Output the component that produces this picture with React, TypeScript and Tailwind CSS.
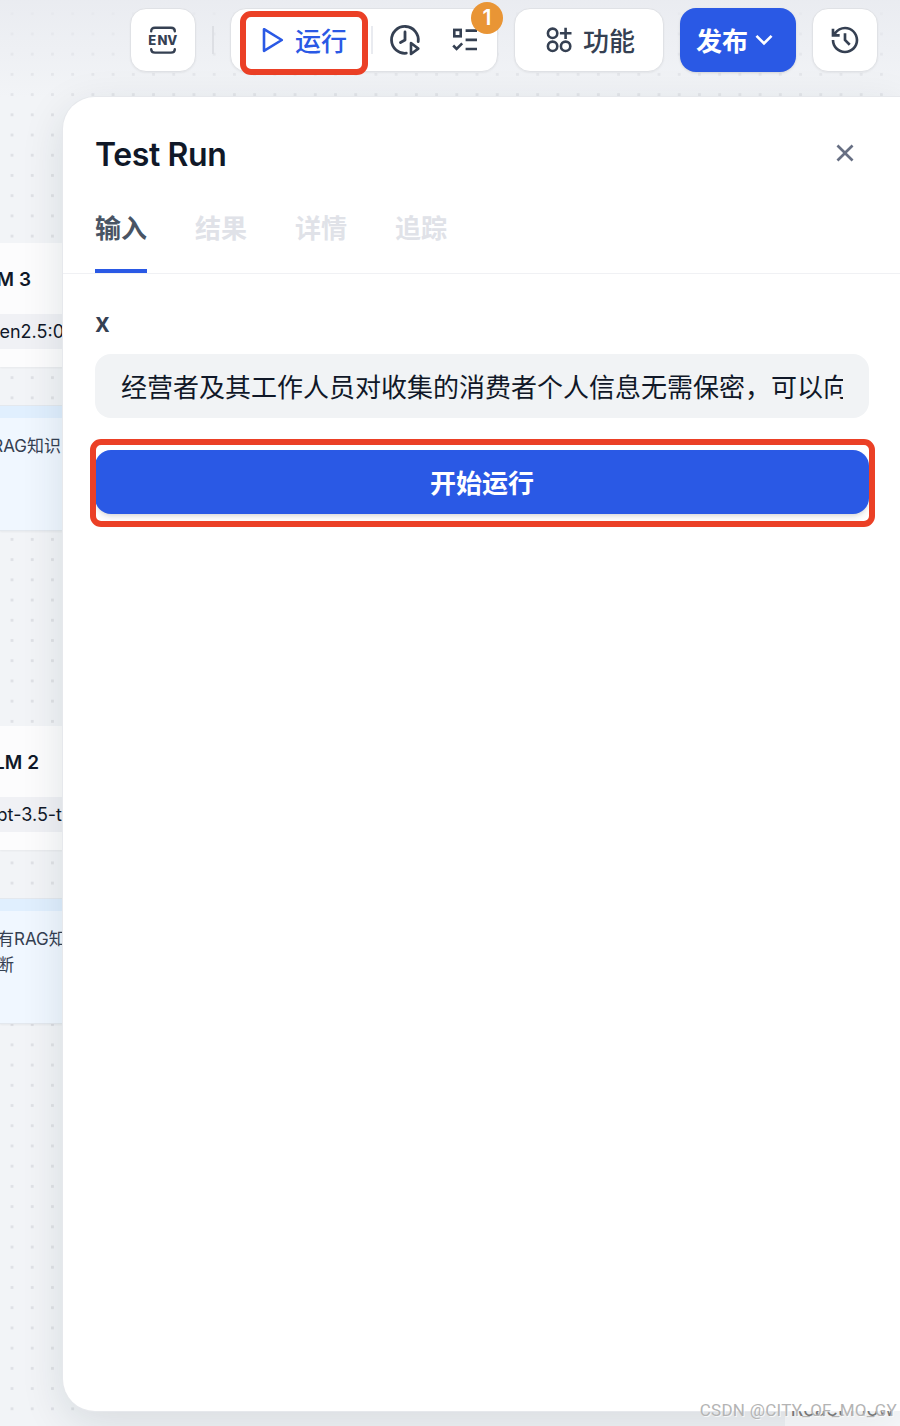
import React from 'react';
import { RiArrowDownSLine, RiCloseLine, RiHistoryLine } from 'react-icons/ri';

const tabs = ['输入', '结果', '详情', '追踪'];

const EnvIcon: React.FC = () => (
  <svg width="32" height="32" viewBox="0 0 32 32" fill="none" stroke="#354052" strokeWidth="2.4" strokeLinecap="round">
    <path d="M4.200 7.200C4.200 4.800 5.400 3.800 8 3.800H24C26.600 3.800 27.800 4.800 27.800 7.200" />
    <path d="M4.200 25.200C4.200 27.600 5.400 28.600 8 28.600H24C26.600 28.600 27.800 27.600 27.800 25.200" />
    <text x="1.2 10.4 20.2" y="20.900" fontSize="13" fontWeight="800" fontFamily="Inter, sans-serif" fill="#354052" stroke="none">ENV</text>
  </svg>
);

const PlayIcon: React.FC = () => (
  <svg width="24" height="28" viewBox="0 0 24 28" fill="none" stroke="#2a59e5" strokeWidth="2.6" strokeLinejoin="round">
    <path d="M3 3.200L20.800 14L3 24.800Z" />
  </svg>
);

const ClockPlayIcon: React.FC = () => (
  <svg width="32" height="32" viewBox="0 0 32 32" fill="none" stroke="#354052" strokeWidth="2.8" strokeLinecap="round" strokeLinejoin="round">
    <path d="M17.300 29.200A13.400 13.400 0 1 1 29.200 17.600" />
    <path d="M16 8V16L11.500 18.500" />
    <path d="M22 19L29.300 24.600L22 30Z" strokeWidth="2.600" />
  </svg>
);

const ChecklistIcon: React.FC = () => (
  <svg width="28" height="26" viewBox="0 0 28 26" fill="none" stroke="#354052" strokeWidth="2.600">
    <rect x="3.300" y="2.900" width="6.400" height="6.400" />
    <path d="M14.600 3.600H26M14.600 12.900H26M14.600 22H26" />
    <path d="M2.200 18.500L5.600 21.900L11.200 16.300" />
  </svg>
);

const AppsAddIcon: React.FC = () => (
  <svg width="28" height="28" viewBox="0 0 28 28" fill="none" stroke="#354052" strokeWidth="2.600">
    <circle cx="7.600" cy="7.300" r="4.700" />
    <circle cx="7.600" cy="20.300" r="4.700" />
    <circle cx="20.600" cy="20.300" r="4.700" />
    <path d="M20.600 1.800V13M14.900 7.300H26.500" />
  </svg>
);

interface LlmNodeProps {
  className: string;
  title: React.ReactNode;
  model: React.ReactNode;
}

const LlmNode: React.FC<LlmNodeProps> = ({ className, title, model }) => (
  <div className={`absolute left-0 w-24 h-[124px] bg-[#fcfcfd] shadow-xs text-[#101828] ${className}`}>
    <div className="h-[71px] pt-[3px] flex items-center text-[19px] font-semibold whitespace-nowrap">{title}</div>
    <div className="h-[35px] bg-[#f0f1f5] flex items-center text-[18px] whitespace-nowrap">{model}</div>
  </div>
);

const NoteNode: React.FC<{ className: string; children: React.ReactNode }> = ({ className, children }) => (
  <div className={`absolute left-0 w-24 h-[126px] bg-[#f0f7ff] border-y border-[#e3e8ee] shadow-xs text-[17px] leading-[26px] text-[#354052] ${className}`}>
    <div className="h-3 bg-[#e0effe]" />
    {children}
  </div>
);

export default function App() {
  return (
    <div className="relative w-[900px] h-[1426px] overflow-hidden bg-[#f2f4f7] font-['Inter','Noto_Sans_CJK_SC',sans-serif]">
      {/* Canvas */}
      <div className="absolute inset-0 bg-[radial-gradient(circle,#dfe1e6_1.300px,transparent_1.900px)] bg-[length:20.225px_20.225px] bg-[position:1.900px_3.600px]">
        <LlmNode
          className="top-[243px]"
          title={<div className="w-[31px] flex justify-end">LLM 3</div>}
          model={<div className="w-[64px] flex justify-end">qwen2.5:0</div>}
        />
        <NoteNode className="top-[405px]">
          <div className="w-[61px] mt-[15px] flex justify-end whitespace-nowrap">有RAG知识</div>
        </NoteNode>
        <LlmNode
          className="top-[726px]"
          title={<div className="w-[39px] flex justify-end">LLM 2</div>}
          model={<div className="w-[62px] flex justify-end">gpt-3.5-t</div>}
        />
        <NoteNode className="top-[898px]">
          <div className="w-24 mt-[15px] -ml-[3px] whitespace-nowrap">有RAG知识</div>
          <div className="-ml-[3px]">断</div>
        </NoteNode>
      </div>

      {/* Toolbar */}
      <header className="relative h-[97px] pt-2 pl-[130px] flex items-start bg-linear-to-b from-[#e9ebf0]/90 to-[#f2f4f7]/20 text-[26px] font-medium text-[#354052]">
        <button className="w-[66px] h-16 rounded-2xl bg-white border border-[#e0e2e6] shadow-xs flex items-center justify-center">
          <EnvIcon />
        </button>
        <div className="mt-[18px] ml-4 w-0.5 h-7 bg-[#dddfe4]" />
        <div className="relative ml-4 w-[268px] h-16 rounded-2xl bg-white border border-[#e0e2e6] shadow-xs flex items-center">
          <div className="ml-[30px] flex items-center gap-[10px] text-[#2a59e5]">
            <PlayIcon />
            <span className="pt-0.5">运行</span>
          </div>
          <div className="ml-[24px] w-0.5 h-7 bg-[#e9ebf0]" />
          <div className="ml-[16px]"><ClockPlayIcon /></div>
          <div className="ml-[30px]"><ChecklistIcon /></div>
          <div className="absolute left-[9px] top-[2px] w-[128px] h-[64px] rounded-[11px] border-[6px] border-[#eb4026]" />
          <div className="absolute -top-[7px] -right-[6px] w-8 h-8 rounded-full bg-[#e99535] flex items-center justify-center text-[21px] font-semibold text-white">1</div>
        </div>
        <button className="ml-4 w-[150px] h-16 rounded-2xl bg-white border border-[#e0e2e6] shadow-xs flex items-center justify-center gap-[10px] pl-0.5">
          <AppsAddIcon />
          <span className="pt-0.5">功能</span>
        </button>
        <button className="ml-4 w-[116px] h-16 rounded-2xl bg-[#2a59e5] shadow-sm text-white flex items-center pl-4">
          <span className="pt-0.5 font-bold">发布</span>
          <RiArrowDownSLine className="w-8 h-8" />
        </button>
        <button className="ml-4 w-[66px] h-16 rounded-2xl bg-white border border-[#e0e2e6] shadow-xs flex items-center justify-center">
          <RiHistoryLine className="w-8 h-8" />
        </button>
      </header>

      {/* Test run panel */}
      <section className="relative ml-[63px] h-[1314px] rounded-l-[32px] bg-white shadow-[0_0_0_1px_#e6e8ec,0_12px_44px_rgba(16,40,50,0.120)]">
        <div className="h-[114px] pl-8 pr-[39px] flex items-center justify-between">
          <h1 className="pt-px text-[32px] tracking-[-0.4px] font-semibold text-[#101828]">Test Run</h1>
          <RiCloseLine className="mb-0.5 w-8 h-8 text-[#676f83]" />
        </div>
        <div className="h-[63px] pl-8 flex gap-12 border-b border-[#f0f1f4] text-[26px] leading-[36px] font-bold text-[#e0e2e8]">
          {tabs.map((tab, i) => (
            <div key={tab} className={i === 0 ? 'h-[62px] border-b-4 border-[#2a59e5] text-[#495464]' : 'h-[62px]'}>
              {tab}
            </div>
          ))}
        </div>
        <div className="pl-8 pr-[31px] pt-[32px]">
          <label className="block h-9 text-[26px] leading-[34px] font-semibold text-[#354052]">x</label>
          <div className="mt-[12px] h-16 rounded-2xl bg-[#f1f3f5] px-[26px] flex items-center">
            <div className="w-full pt-[3px] overflow-hidden whitespace-nowrap text-[26px] leading-[40px] text-[#101828]">
              经营者及其工作人员对收集的消费者个人信息无需保密，可以向
            </div>
          </div>
          <div className="relative mt-8">
            <button className="w-full h-16 pt-0.5 rounded-2xl bg-[#2a59e5] shadow-md text-[26px] font-bold text-white">开始运行</button>
            <div className="absolute -left-[5px] -right-[6px] -top-[11px] -bottom-[13px] rounded-[11px] border-[6px] border-[#eb4026]" />
          </div>
        </div>
      </section>

      {/* Attribution, only its lower edge shows under the panel */}
      <div className="absolute right-0 bottom-0 w-[115px] h-[15px] bg-white/40 overflow-hidden flex justify-center">
        <div className="-mt-[14px] h-6 text-[20px] leading-6 text-[#777] whitespace-nowrap">React Flow</div>
      </div>

      <div className="absolute right-[3px] bottom-[6px] font-['Roboto',sans-serif] text-[17px] tracking-[0.260px] leading-5 text-[#b4b4b4] whitespace-nowrap [text-shadow:1px_1px_0_#ffffffb0]">
        CSDN @CITY_OF_MO_GY
      </div>
    </div>
  );
}
